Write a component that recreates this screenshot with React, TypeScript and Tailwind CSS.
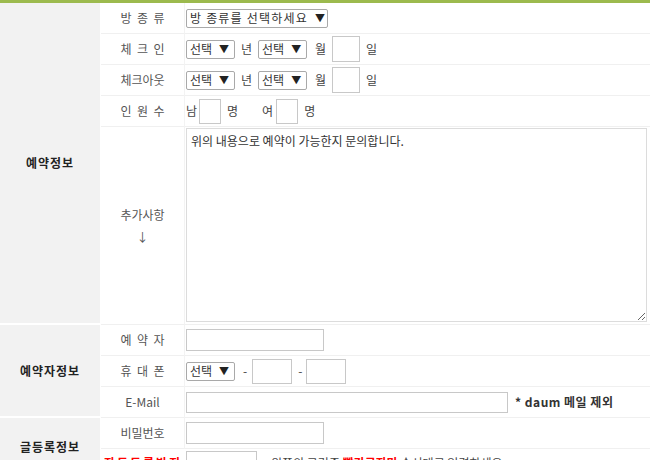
import React from 'react';

const font = { fontFamily: '"Noto Sans CJK KR", "Noto Sans", sans-serif' };

function FakeSelect({ label, w, wide }: { label: string; w: string; wide?: boolean }) {
  return (
    <span className={`${w} h-[19px] border border-[#a9a9a9] rounded-[2px] bg-white flex items-center gap-[7px] pl-[3px] text-[12px] text-[#333] leading-none shrink-0`}>
      <span className={wide ? 'tracking-[1.2px]' : ''}>{label}</span>
      <span className="text-[10px] text-[#222]">▼</span>
    </span>
  );
}

function Box({ w, h = 'h-[25px]' }: { w: string; h?: string }) {
  return <span className={`${w} ${h} border border-[#c8c8c8] bg-white block shrink-0`} />;
}

const labelCell = 'flex items-center justify-center border-b border-[#f0f0f0] border-r border-r-[#f3f3f3] text-[12px] text-[#555]';
const rowBase = 'flex items-center pl-[1px] border-b border-[#f0f0f0] text-[12px] text-[#444]';
const fieldCell = `${rowBase} gap-[6px]`;
const groupCell = 'bg-[#f2f2f2] border-r border-r-white flex items-center justify-center text-[12px] font-bold text-[#222] tracking-[1px]';

export default function App() {
  return (
    <div className="w-[650px] h-[460px] overflow-hidden bg-white" style={font}>
      <div className="h-[3px] bg-[#9cba4e]" />
      <div className="grid grid-cols-[101px_84px_1fr] grid-rows-[31px_31px_31px_31px_198px_31px_31px_31px_31px_31px]">
        {/* 예약정보 */}
        <div className={`row-span-5 border-b-2 border-white ${groupCell}`}>예약정보</div>
        <div className={labelCell}>방&nbsp;&nbsp;종&nbsp;&nbsp;류</div>
        <div className={fieldCell}>
          <FakeSelect label="방 종류를 선택하세요" w="w-[142px]" wide />
        </div>

        <div className={labelCell}>체&nbsp;&nbsp;크&nbsp;&nbsp;인</div>
        <div className={fieldCell}>
          <FakeSelect label="선택" w="w-[49px]" />
          <span>년</span>
          <FakeSelect label="선택" w="w-[49px]" />
          <span className="ml-[2px]">월</span>
          <Box w="w-[28px]" h="h-[26px]" />
          <span>일</span>
        </div>

        <div className={labelCell}>체크아웃</div>
        <div className={fieldCell}>
          <FakeSelect label="선택" w="w-[49px]" />
          <span>년</span>
          <FakeSelect label="선택" w="w-[49px]" />
          <span className="ml-[2px]">월</span>
          <Box w="w-[28px]" h="h-[26px]" />
          <span>일</span>
        </div>

        <div className={labelCell}>인&nbsp;&nbsp;원&nbsp;&nbsp;수</div>
        <div className={rowBase}>
          <span>남</span>
          <span className="ml-[2px]"><Box w="w-[22px]" /></span>
          <span className="ml-[6px]">명</span>
          <span className="ml-[24px]">여</span>
          <span className="ml-[3px]"><Box w="w-[22px]" /></span>
          <span className="ml-[6px]">명</span>
        </div>

        <div className={`${labelCell} flex-col leading-[22px]`}>
          <span>추가사항</span>
          <span>↓</span>
        </div>
        <div className="border-b border-[#f0f0f0] pl-[1px] pt-[1px] pr-[3px]">
          <textarea
            defaultValue="위의 내용으로 예약이 가능한지 문의합니다."
            className="w-[461px] h-[194px] border border-[#dcdcdc] px-[4px] py-[3px] text-[12px] text-[#333] leading-[17px] outline-none"
            style={font}
          />
        </div>

        {/* 예약자정보 */}
        <div className={`row-span-3 border-b-2 border-white ${groupCell}`}>예약자정보</div>
        <div className={labelCell}>예&nbsp;&nbsp;약&nbsp;&nbsp;자</div>
        <div className={fieldCell}>
          <Box w="w-[138px]" h="h-[22px]" />
        </div>

        <div className={labelCell}>휴&nbsp;&nbsp;대&nbsp;&nbsp;폰</div>
        <div className={rowBase}>
          <FakeSelect label="선택" w="w-[49px]" />
          <span className="ml-[8px]">-</span>
          <span className="ml-[5px]"><Box w="w-[40px]" /></span>
          <span className="ml-[6px]">-</span>
          <span className="ml-[4px]"><Box w="w-[40px]" /></span>
        </div>

        <div className={labelCell}>E-Mail</div>
        <div className={fieldCell}>
          <Box w="w-[322px]" h="h-[21px]" />
          <span className="ml-[1px] font-bold text-[#333] tracking-[0.5px]">* daum 메일 제외</span>
        </div>

        {/* 글등록정보 */}
        <div className={`row-span-2 ${groupCell} pb-[4px]`}>글등록정보</div>
        <div className={labelCell}>비밀번호</div>
        <div className={fieldCell}>
          <Box w="w-[138px]" h="h-[22px]" />
        </div>

        <div className="flex items-start justify-center pt-[5px] text-[12px] font-bold text-[#ff0000] tracking-[2px]">
          자동등록방지
        </div>
        <div className="flex items-start gap-[14px] pl-[1px] pt-[2px] text-[12px] text-[#444]">
          <Box w="w-[71px]" h="h-[24px]" />
          <span className="pt-[3px]">
            왼쪽의 그림중 <span className="font-bold text-[#ff0000]">빨간글자만</span> 순서대로 입력하세요
          </span>
        </div>
      </div>
    </div>
  );
}
